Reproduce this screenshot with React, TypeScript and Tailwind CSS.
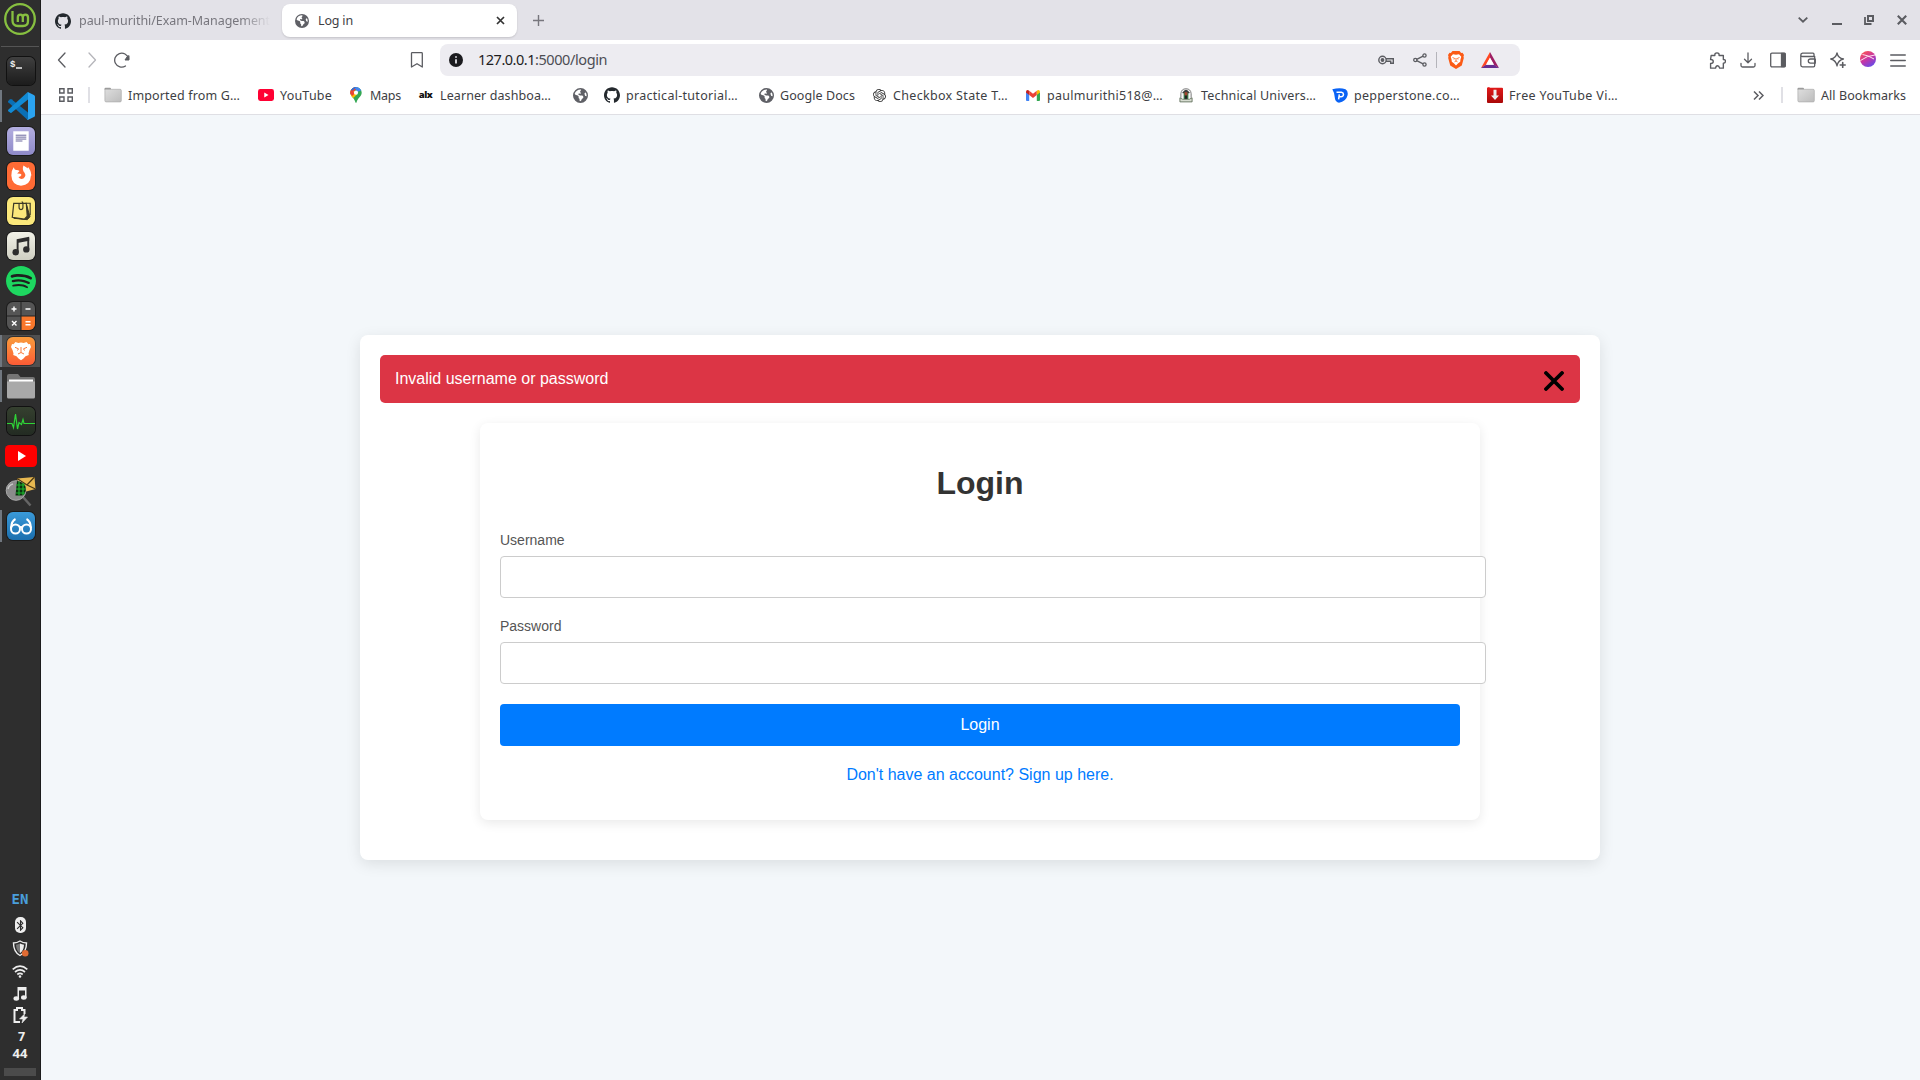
import React, { useLayoutEffect, useRef } from "react";
import { SiGithub, SiSpotify, SiOpenai } from "react-icons/si";
import { MdBluetooth } from "react-icons/md";
import { FaEarthAmericas } from "react-icons/fa6";

type Kids = { children?: React.ReactNode };

/* Text whose letter spacing is adjusted so that it takes the given width. */
function FitText({ text, width, className = "" }: { text: string; width: number; className?: string }) {
  const ref = useRef<HTMLSpanElement>(null);
  useLayoutEffect(() => {
    const el = ref.current;
    if (!el) return;
    el.style.letterSpacing = "0px";
    const natural = el.getBoundingClientRect().width;
    el.style.letterSpacing = `${(width - natural) / text.length}px`;
  }, [text, width]);
  return (
    <span ref={ref} className={`inline-block whitespace-nowrap ${className}`}>
      {text}
    </span>
  );
}

const Globe = ({ className = "h-[15px] w-[15px]" }: { className?: string }) => (
  <FaEarthAmericas className={`${className} shrink-0 text-[#5f6066]`} />
);

const Folder = () => (
  <svg viewBox="0 0 18 16" className="h-4 w-[18px] shrink-0">
    <defs>
      <linearGradient id="fold" x1="0" y1="0" x2="1" y2="1">
        <stop offset="0" stopColor="#dedede" />
        <stop offset="1" stopColor="#bcbcbc" />
      </linearGradient>
    </defs>
    <path d="M0.5 3V1.8Q.5.8 1.5.8H6Q7 .8 7 2v1z" fill="#9a9a9a" />
    <rect x="0.9" y="2.3" width="16.4" height="12.6" rx="1.2" fill="url(#fold)" stroke="#adadad" strokeWidth=".7" />
  </svg>
);

const YouTube = ({ className = "h-3 w-4" }: { className?: string }) => (
  <svg viewBox="0 0 32 22" className={`${className} shrink-0`} preserveAspectRatio="none">
    <rect width="32" height="22" rx="4.5" fill="#f03" />
    <path d="M12.5 6.3v9.4l8.5-4.7z" fill="#fff" />
  </svg>
);

const MapPin = () => (
  <svg viewBox="0 0 12 16" className="h-4 w-3 shrink-0">
    <defs>
      <clipPath id="pin">
        <path d="M6 0a5.7 5.7 0 0 1 5.7 5.7C11.7 9.3 7.6 11 6.6 15.3Q6 16.5 5.4 15.3C4.4 11 .3 9.3.3 5.7A5.7 5.7 0 0 1 6 0z" />
      </clipPath>
    </defs>
    <g clipPath="url(#pin)">
      <rect width="12" height="16" fill="#34a853" />
      <path d="M0 0h7L3 7H0z" fill="#ea4335" />
      <path d="M4 0h8v3L7.5 5z" fill="#4285f4" />
      <path d="M7 7.5 0 14V8l4-4z" fill="#fbbc04" />
      <path d="M0 0h6L1 5z" fill="#1a73e8" />
      <path d="M1 2.5 5 6 2.5 9-1 6z" fill="#ea4335" />
      <circle cx="6" cy="5.7" r="2.1" fill="#fff" />
    </g>
  </svg>
);

const Gmail = () => (
  <svg viewBox="0 0 24 18" className="h-[11px] w-[14px] shrink-0" preserveAspectRatio="none">
    <path d="M0 3v13.5Q0 18 1.5 18H5.5V7z" fill="#4285f4" />
    <path d="M24 3v13.5q0 1.5-1.5 1.5h-4V7z" fill="#34a853" />
    <path d="M5.5 1.3 12 6.2l6.5-4.9V8L12 13 5.5 8z" fill="#ea4335" />
    <path d="M0 2.5Q.5-.8 4 .3l1.5 1V8L0 4z" fill="#c5221f" />
    <path d="M24 2.5Q23.5-.8 20 .3l-1.5 1V8L24 4z" fill="#fbbc04" />
  </svg>
);

const Crest = () => (
  <svg viewBox="0 0 14 16" className="h-[15px] w-[14px] shrink-0">
    <path d="M1.5 10.5V6Q2 .8 7 .8T12.5 6v4.5" fill="#f4f4f4" stroke="#777" strokeWidth="1" />
    <path d="M3.5 4.5Q5 1.8 7 1.8t3.5 2.7v1h-7z" fill="#3b3b3b" />
    <rect x="4.5" y="5" width="5" height="7" fill="#357a46" />
    <rect x="5.5" y="4.5" width="3" height="3.5" fill="#a7432f" />
    <rect x="5.8" y="8" width="2.4" height="4" fill="#222" />
    <path d="M.5 10.5 3.5 12h7l3-1.5v4.3H.5z" fill="#d8ddd2" stroke="#5b6b56" strokeWidth=".9" />
  </svg>
);

const Pepperstone = () => (
  <svg viewBox="0 0 16 15" className="h-[15px] w-4 shrink-0">
    <path d="M.3 1.3Q8-.8 13.5 1.3 16.5 3 15.5 7.5 14 13.5 7 14.8q-3.5-1-4-4Q2.8 5 .3 1.3z" fill="#0a63f5" />
    <path d="M4.5 4.3h5q2 .3 2 2.2-.3 2.300-2.500 2.300H6.600M6.600 11.300 7.300 6.300" fill="none" stroke="#fff" strokeWidth="1.5" />
  </svg>
);

const RedDownload = () => (
  <svg viewBox="0 0 16 16" className="h-4 w-4 shrink-0">
    <defs>
      <linearGradient id="red" x1="0" y1="0" x2="0" y2="1">
        <stop offset="0" stopColor="#e31a1a" />
        <stop offset="1" stopColor="#a90808" />
      </linearGradient>
    </defs>
    <path d="M0 .8 2 0l1 .8h12q1 0 1 1V15q0 1-1 1H1q-1 0-1-1z" fill="url(#red)" />
    <path d="M6.5 2.8h3V8.500H12L8 13 4 8.500h2.500z" fill="#eee" />
  </svg>
);

/* ---------- desktop panel ---------- */

function DockSlot({ children, active, focus }: Kids & { active?: boolean; focus?: boolean }) {
  return (
    <div className="flex h-[35px] w-[41px] shrink-0 items-center">
      <div className={`flex h-8 w-10 items-center ${focus ? "bg-[#505050]" : ""}`}>
        <div className={`h-8 w-[2px] ${active ? "bg-[#70777f]" : ""}`} />
        <div className="flex w-[38px] items-center justify-center">{children}</div>
      </div>
    </div>
  );
}

const Tile = ({ children, className }: Kids & { className: string }) => (
  <div className={`flex h-[28px] w-[28px] items-center justify-center overflow-hidden rounded-[6px] shadow-[0_0_0_1px_#0006] ${className}`}>
    {children}
  </div>
);

function Dock() {
  return (
    <aside className="flex h-full w-[41px] shrink-0 flex-col overflow-hidden border-r border-[#1c1c1c] bg-[#2e2e2e]">
      <div className="flex h-[46px] w-[40px] shrink-0 justify-center pt-[3px]">
        <svg viewBox="0 0 32 32" className="h-8 w-8">
          <circle cx="16" cy="16" r="14.8" fill="none" stroke="#87c040" strokeWidth="2.3" />
          <path
            d="M8.5 8v9.5q0 5.5 5.500 5.500h5q5 0 5-5v-3.500q0-2.800-2.600-2.800t-2.600 2.800v4.500M18.800 14.500q0-2.800-2.500-2.800t-2.500 2.800v4.500"
            fill="none"
            stroke="#87c040"
            strokeWidth="2.3"
          />
        </svg>
      </div>
      <div className="mb-[6px] ml-px h-px w-[38px] shrink-0 bg-[#555]" />

      <DockSlot>
        <Tile className="bg-linear-to-b from-[#404040] to-[#1c1c1c] shadow-[0_0_0_1px_#111]">
          <svg viewBox="0 0 28 28" className="h-[28px] w-[28px] shrink-0">
            <text x="3" y="10" fontSize="9" fontWeight="bold" fill="#eee" fontFamily="Liberation Mono, monospace">$</text>
            <path d="M9 11h6" stroke="#eee" strokeWidth="1.3" />
          </svg>
        </Tile>
      </DockSlot>
      <DockSlot active>
        <svg viewBox="0 0 100 100" className="h-[28px] w-[28px]">
          <path d="M5 31.5 12 26q2-1.500 4 0L76 74v25q-2 .5-5-2L4.500 37q-2.500-3 .5-5.500z" fill="#0a6fb5" />
          <path d="M5 68.500 12 74q2 1.500 4 0L76 26V1q-2-.5-5 2L4.500 63q-2.500 3 .5 5.500z" fill="#118ad4" />
          <path d="M71 2q2-2 5-1l20 9.500q4 2 4 6v67q0 4-4 6L76 99q-3 1-5-2 4 2 4-3V6q0-5-4-4z" fill="#2ba4f1" />
        </svg>
      </DockSlot>
      <DockSlot>
        <Tile className="bg-linear-to-b from-[#b3aee0] to-[#8f8ac8]">
          <svg viewBox="0 0 29 29" className="h-[28px] w-[28px]">
            <path d="M6.500 4.500h12l4 0v20h-16z" fill="#fff" />
            <path d="M9 8.500h11M9 10.500h11M9 12.500h11M9 14.500h7" stroke="#68639c" strokeWidth="1" />
          </svg>
        </Tile>
      </DockSlot>
      <DockSlot>
        <Tile className="bg-[#ff6b35]">
          <svg viewBox="0 0 29 29" className="h-[28px] w-[28px]">
            <path d="M4.500 14Q4.300 9 7 5.500q.5 2.500 2.300 2.800 2-.3 3.700 1L10.500 12q4 0 4.500 1.500-1 2-3.200 2 2.200 3 5.200 1.500 3.500-2.500 1-6-2.500-3-1-7.500 7.500 4 7.800 10.500Q24.300 24 14.500 24.500 5 24 4.500 14z" fill="#fff" />
            <path d="M21.500 6q3 4 3 8" stroke="#fff" strokeWidth="1.6" fill="none" />
          </svg>
        </Tile>
      </DockSlot>
      <DockSlot>
        <Tile className="bg-[#fbe87b]">
          <svg viewBox="0 0 29 29" className="h-[28px] w-[28px]" fill="none" stroke="#3d3a26">
            <path d="M19 6.500h5L24 19" strokeWidth="1.2" />
            <path d="m7 22 14 1.500 2.800-3L20 7l1 13z" strokeWidth="1" fill="#3d3a26" />
            <path d="M7 6.500h13l1 13.500-3 3L5.500 21z" fill="#fbe87b" strokeWidth="1.3" />
            <path d="M12.500 7v4q0 2 2 2t2-2V6.500q0-1.500-1.300-1.500" strokeWidth="1.2" />
          </svg>
        </Tile>
      </DockSlot>
      <DockSlot>
        <Tile className="bg-linear-to-b from-[#f2f2e8] to-[#cfcfc2]">
          <svg viewBox="0 0 29 29" className="h-[28px] w-[28px]" fill="#2d2d2d">
            <path d="M10 7.500 23 5v4L12 11.200V21h-2z" />
            <path d="M21 6h2v12h-2z" />
            <circle cx="9" cy="21" r="3.3" />
            <circle cx="20" cy="18" r="3.3" />
          </svg>
        </Tile>
      </DockSlot>
      <DockSlot>
        <div className="flex h-[30px] w-[30px] items-center justify-center rounded-full bg-[#1f1f1f]">
          <SiSpotify className="h-[30px] w-[30px] text-[#1ed760]" />
        </div>
      </DockSlot>
      <DockSlot>
        <Tile className="bg-[#555]">
          <svg viewBox="0 0 28 28" className="h-[28px] w-[28px]">
            <path d="M14 14h14v14H14z" fill="#f9772b" />
            <path d="M14 0v28M0 14h28" stroke="#242424" strokeWidth="1" />
            <path d="M4.500 7h5M7 4.500v5M18.500 7h5M5 19l4.500 4.500M9.500 19 5 23.500M18.500 19.800h5M18.500 22.800h5" stroke="#fff" strokeWidth="1.4" />
          </svg>
        </Tile>
      </DockSlot>
      <DockSlot active focus>
        <Tile className="bg-linear-to-b from-[#f99b3c] to-[#fb5a35]">
          <svg viewBox="0 0 28 28" className="h-[28px] w-[28px]">
            <path d="m8.500 5 2.800 1L14 5.600 16.700 6l2.800-1 2 2.300 1.500-.3 1 3-1.500 3-1 3.500 .3 1.500-3.300 1.200-2 2.300L14 23.300l-2.500-1.800-2-2.300-3.300-1.200.3-1.500-1-3.500L4 10l1-3 1.500.3z" fill="#fff" />
            <path d="M8 10.300l3.500 1.500-1 1.700M20 10.300l-3.500 1.500 1 1.700M14 10v5.500M11 17l3-1.500 3 1.500" stroke="#fb7a38" strokeWidth="1" fill="none" />
          </svg>
        </Tile>
      </DockSlot>
      <DockSlot active>
        <svg viewBox="0 0 28 26" className="h-[26px] w-[28px]">
          <path d="M0 3Q0 1 2 1h9l2.500 3H26q2 0 2 2v18H0z" fill="#747474" />
          <path d="M2 6.500h24v3H2z" fill="#fff" />
          <path d="M0 8.500h28V24q0 1.500-1.500 1.500h-25Q0 25.500 0 24z" fill="#a9a9a9" />
        </svg>
      </DockSlot>
      <DockSlot>
        <Tile className="bg-linear-to-b from-[#35402f] to-[#232b22] shadow-[0_0_0_1px_#111]">
          <svg viewBox="0 0 28 28" className="h-[28px] w-[28px]">
            <path d="M0 16.500h5l1.500 4L8.500 7l2 15 1.500-6.500 2.500 2 1.500-5 1 4H28" fill="none" stroke="#2fd437" strokeWidth="1.2" />
          </svg>
        </Tile>
      </DockSlot>
      <DockSlot>
        <svg viewBox="0 0 32 22" className="h-[22px] w-8">
          <rect width="32" height="22" rx="4.5" fill="#f00" />
          <path d="M13 6v10l8-5z" fill="#fff" />
        </svg>
      </DockSlot>
      <DockSlot>
        <svg viewBox="0 0 32 32" className="h-8 w-8">
          <path d="M12 3.500 29.500 2l1 12-13 3.500z" fill="#e8b850" />
          <path d="M12 3.500 22 10l7.500-8M21 9.500l9.500 4.500" fill="none" stroke="#4a3714" strokeWidth="1.3" />
          <path d="m18 22 7.500 8.500" stroke="#666" strokeWidth="2.5" />
          <circle cx="11" cy="15.5" r="9.8" fill="#8b8b8b" stroke="#aaa" />
          <path d="M12 6q9 1 9 8.500-1 5.500-4 6h-6.500z" fill="#0b310e" />
          <path d="M11 10h9M11 14h10M11 18h9M14 6.500v14M18 8v12" stroke="#1db52d" strokeWidth="1.2" />
          <path d="M3 14q1-4 5-5" stroke="#c7c7c7" strokeWidth="1.5" fill="none" />
        </svg>
      </DockSlot>
      <DockSlot active>
        <Tile className="bg-linear-to-b from-[#3a9ad9] to-[#1b6fae]">
          <svg viewBox="0 0 28 28" className="h-[28px] w-[28px]" fill="none" stroke="#fff" strokeWidth="2">
            <circle cx="8.5" cy="17" r="4.5" />
            <circle cx="19.5" cy="17" r="4.5" />
            <path d="M4 16q.5-7 4.500-9M24 16q-.5-7-4.500-9M12.500 15.500q1.500-1 3 0" />
          </svg>
        </Tile>
      </DockSlot>

      <div className="mt-auto flex w-10 shrink-0 flex-col items-center font-['Noto_Sans',sans-serif] font-bold text-[#eee]">
        <div className="flex h-[27px] items-center font-['DejaVu_Sans_Mono',monospace] text-[14px] text-[#4a9edb]">EN</div>
        <div className="flex h-6 items-center">
          <div className="flex h-4 w-[11px] items-center justify-center rounded-[5px] bg-[#eee] text-[#2e2e2e]">
            <MdBluetooth className="h-[13px] w-[13px] shrink-0" />
          </div>
        </div>
        <div className="flex h-[22px] items-center">
          <svg viewBox="0 0 17 17" className="h-[17px] w-[17px]">
            <path d="M8 1q3 2 6.500 2 0 9-6.500 12.500Q1.500 12 1.500 3 5 3 8 1z" fill="none" stroke="#eee" strokeWidth="1.4" />
            <path d="M8 3.500q2 1 4 1.300-.3 6-4 8.500z" fill="#eee" />
            <path d="M8 3.500q-2 1-4 1.300.3 6 4 8.500z" fill="#777" />
            <circle cx="13.2" cy="13.3" r="3.3" fill="#e06c34" />
          </svg>
        </div>
        <div className="flex h-[25px] items-center">
          <svg viewBox="0 0 16 13" className="h-[13px] w-4" fill="none" stroke="#eee" strokeWidth="1.7">
            <path d="M.7 4.300q7.300-6.300 14.600 0M3 7q5-4.300 10 0M5.300 9.500q2.700-2.300 5.400 0" />
            <circle cx="8" cy="11.5" r="1.3" fill="#eee" stroke="none" />
          </svg>
        </div>
        <div className="flex h-5 items-center">
          <svg viewBox="0 0 14 14" className="h-[14px] w-[14px]" fill="#eee">
            <path d="M4.500 0h9v11h-1.500V3.500H6V12H4.500z" />
            <ellipse cx="3.3" cy="11.5" rx="2.8" ry="2.2" />
            <ellipse cx="10.8" cy="10.5" rx="2.8" ry="2.2" />
          </svg>
        </div>
        <div className="flex h-[22px] items-center">
          <svg viewBox="0 0 16 16" className="h-4 w-4">
            <path d="M12.500 7V3H10V1H5v2H2.500v12H8" fill="none" stroke="#eee" strokeWidth="2" />
            <path d="m12.500 7-5 5H11l-1 4 5.500-6H12z" fill="#eee" stroke="#eee" strokeWidth=".6" />
          </svg>
        </div>
        <div className="flex h-[23px] items-center pl-[3px] text-[12.5px]">7</div>
        <div className="flex h-[10px] items-center text-[13px]">44</div>
        <div className="mt-[9px] mb-1 h-2 w-8 bg-[#4b4b4b]" />
      </div>
    </aside>
  );
}

/* ---------- browser chrome ---------- */

const Cell = ({ children, className = "" }: Kids & { className?: string }) => (
  <div className={`flex h-8 w-[30px] shrink-0 items-center justify-center ${className}`}>{children}</div>
);

function TabStrip() {
  return (
    <div className="flex h-10 shrink-0 items-start bg-[#e3e2e8] pt-1">
      <div className="flex h-[33px] w-[241px] items-center pl-[14px]">
        <SiGithub className="h-4 w-4 shrink-0 text-[#24292e]" />
        <div className="mt-px ml-2 w-[191px] overflow-hidden mask-r-from-85% text-[12.5px] text-[#77767d]">
          <FitText text="paul-murithi/Exam-Management" width={191} />
        </div>
      </div>
      <div className="flex h-[33px] w-[235px] items-center rounded-lg bg-white pl-[13px] shadow-[0_1px_2px_#0002]">
        <Globe className="h-[14px] w-[14px]" />
        <FitText text="Log in" width={35} className="mt-px ml-[9px] text-[12.5px] text-[#3f4045]" />
        <svg viewBox="0 0 9 9" className="mr-[12px] ml-auto h-[9px] w-[9px]">
          <path d="m1 1 7 7M8 1 1 8" stroke="#333" strokeWidth="1.7" />
        </svg>
      </div>
      <Cell className="ml-[6px]">
        <svg viewBox="0 0 11 11" className="h-[11px] w-[11px]">
          <path d="M5.500 0v11M0 5.500h11" stroke="#77767d" strokeWidth="1.4" />
        </svg>
      </Cell>
      <div className="ml-auto flex text-[#5b5c61]">
        <div className="flex h-8 w-[34px] items-center justify-center">
          <svg viewBox="0 0 10 6" className="h-[6px] w-[10px]"><path d="m.7.7 4.300 4L9.300.7" fill="none" stroke="currentColor" strokeWidth="1.8" /></svg>
        </div>
        <div className="flex h-8 w-[34px] items-center justify-center pt-2"><div className="h-[2px] w-[10px] bg-current" /></div>
        <div className="flex h-8 w-[30px] items-center justify-center">
          <svg viewBox="0 0 10 10" className="h-[10px] w-[10px]" fill="none" stroke="currentColor"><path d="M4 1h5v5H4z" strokeWidth="2" /><path d="M1 2v7h6.500" strokeWidth="1.8" /></svg>
        </div>
        <div className="flex h-8 w-[36px] items-center justify-center">
          <svg viewBox="0 0 10 10" className="h-[10px] w-[10px]"><path d="m.8.8 8.400 8.400M9.200.8.8 9.200" stroke="currentColor" strokeWidth="2.1" /></svg>
        </div>
      </div>
    </div>
  );
}

const Stroke = ({ d, children, className = "h-4 w-4" }: Kids & { d?: string; className?: string }) => (
  <svg viewBox="0 0 16 16" className={className} fill="none" stroke="currentColor" strokeWidth="1.3" strokeLinecap="round" strokeLinejoin="round">
    {d && <path d={d} />}
    {children}
  </svg>
);

function Toolbar() {
  return (
    <div className="flex h-9 shrink-0 items-center bg-white pt-1 pl-[6px] text-[#5b5c61]">
      <Cell><Stroke d="M11 1 4.500 8 11 15" /></Cell>
      <Cell className="text-[#b5b5ba]"><Stroke d="M5 1l6.500 7L5 15" /></Cell>
      <Cell>
        <Stroke d="M11.500 14A7 7 0 1 1 14.500 6.500">
          <path d="M15 4v4h-4l2-3z" fill="currentColor" strokeWidth="1" />
        </Stroke>
      </Cell>
      <Cell className="ml-[265px]"><Stroke d="M3 .7h9.500q.8 0 .8.8V15L8 11.700 2.500 15V1.500q0-.8.5-.8z" /></Cell>
      <div className="ml-2 flex h-8 w-[1080px] items-center rounded-lg bg-[#edecf1] pl-[9px]">
        <svg viewBox="0 0 14 14" className="h-[14px] w-[14px]">
          <circle cx="7" cy="7" r="7" fill="#1b1b1f" />
          <path d="M7 6.200v4.300M7 3.200v1.600" stroke="#edecf1" strokeWidth="1.7" />
        </svg>
        <div className="ml-[15px] flex text-[14.5px] text-[#1d1d22]">
          <FitText text="127.0.0.1" width={57} />
          <FitText text=":5000/login" width={72} className="text-[#4c4d54]" />
        </div>
        <div className="ml-auto flex items-center pr-[21px]">
          <svg viewBox="0 0 16 10" className="h-[10px] w-4" fill="none" stroke="#5b5c61" strokeWidth="1.4">
            <circle cx="4.5" cy="5" r="3.7" />
            <circle cx="4.5" cy="5" r="1.2" fill="#5b5c61" />
            <path d="M8 3.700h7.300v4.600h-2.600V6.300H8" />
          </svg>
          <svg viewBox="0 0 14 14" className="ml-[19px] h-[14px] w-[14px]" fill="none" stroke="#5b5c61" strokeWidth="1.3">
            <circle cx="2.3" cy="7" r="1.6" />
            <circle cx="11.5" cy="2.5" r="1.6" />
            <circle cx="11.5" cy="11.5" r="1.6" />
            <path d="m3.700 6.300 6.400-3.100M3.700 7.700l6.400 3.100" />
          </svg>
          <div className="ml-[9px] h-4 w-px bg-[#b4b4ba]" />
          <svg viewBox="0 0 16 18" className="ml-[11px] h-[18px] w-4">
            <path d="M4.500 0h7l1.700 2 1.300-.2L16 4l-.5 1.500.3 1.500-2 7.500L8 18l-5.800-3.500L.2 7l.3-1.500L0 4l1.500-2.200 1.300.2z" fill="#fb5a15" />
            <path d="M5 3.300 8 3.800l3-.5 2.300 2.500-.8 2.500-.3 2.500-2 1.500L8 14.500l-2.200-2.200-2-1.500-.3-2.500-.8-2.500z" fill="#fff" />
            <path d="m4.500 6.500 2.300 1-.8 1M11.500 6.500l-2.300 1 .8 1M8 7v3M6.500 10.800 8 10l1.500.8" stroke="#fb5a15" strokeWidth=".8" fill="none" />
          </svg>
          <svg viewBox="0 0 18 16" className="ml-[17px] h-4 w-[18px]">
            <path d="M9 0 0 16l5-3 4-7z" fill="#ff4724" />
            <path d="m9 0 9 16-5-3-4-7z" fill="#9e1f63" />
            <path d="M0 16h18l-5-3.200H5z" fill="#662d91" />
            <path d="m9 5.500 4 7.300H5z" fill="#fff" />
          </svg>
        </div>
      </div>
      <div className="ml-[183px] flex">
        <Cell className="pr-[2px]"><Stroke className="h-[17px] w-[17px]" d="M2 3.300h3.500Q5.300.8 7.500.8t2 2.500h4V7q2.200 0 2 1.800-.2 1.700-2 1.700v4.700H10Q9.500 13 8 13t-1.800 2.200H1.500v-4.500q2.500 0 2.500-1.800T1.500 7z" /></Cell>
        <Cell><Stroke d="M8 1v9.500M4.500 7.300 8 10.800l3.500-3.500M1 11.500v2q0 1.500 1.500 1.500h11q1.500 0 1.500-1.500v-2" /></Cell>
        <Cell><Stroke><rect x=".7" y="1.2" width="14.6" height="13.6" rx="1.2" /><path d="M11.500 1.500h3.500v13h-3.500z" fill="currentColor" /></Stroke></Cell>
        <Cell><Stroke d="M14.700 4.500H2.500Q.8 4.500.8 3T2.500 1.200H13q1 0 1 1v2M.8 3v10q0 1.800 1.700 1.800h11q1.200 0 1.200-1.200V4.500M15.300 7H10.500Q8.300 7 8.300 9.100t2.200 2.100h4.800z" /></Cell>
        <Cell>
          <Stroke d="M7 .8Q8 6 13.500 7 8 8.300 7 14 6 8.300.7 7 6 6 7 .8z"><path d="M12.700 10.500v5M10.200 13h5" strokeWidth="1.6" /></Stroke>
        </Cell>
        <Cell>
          <svg viewBox="0 0 16 16" className="mb-[2px] h-4 w-4">
            <defs>
              <linearGradient id="ava" x1=".2" y1="0" x2=".8" y2="1">
                <stop offset="0" stopColor="#ff5350" />
                <stop offset=".5" stopColor="#c336a8" />
                <stop offset="1" stopColor="#5b4df0" />
              </linearGradient>
            </defs>
            <circle cx="8" cy="8" r="8" fill="url(#ava)" />
            <path d="M.5 9.500Q7 4.500 15 4M2.500 3.500q5 .5 11.500 4.500" stroke="#ffe3ef" strokeWidth="1" fill="none" />
          </svg>
        </Cell>
        <Cell><Stroke d="M.7 3h14.600M.7 8.500h14.600M.7 14h14.600" /></Cell>
      </div>
    </div>
  );
}

function Bookmark({ icon, text, width, className }: { icon: React.ReactNode; text?: string; width?: number; className: string }) {
  return (
    <div className={`flex shrink-0 items-center ${className}`}>
      {icon}
      {text && <FitText text={text} width={width ?? 0} className="mt-[2px]" />}
    </div>
  );
}

function BookmarksBar() {
  return (
    <div className="flex h-[39px] shrink-0 items-center border-b border-[#dfdfe4] bg-white pl-[18px] text-[12.5px] text-[#3d3e43]">
      <svg viewBox="0 0 14 14" className="h-[14px] w-[14px]" fill="none" stroke="#5b5c61" strokeWidth="1.4">
        <path d="M.7.7h4.300V5H.7zM9 .7h4.300V5H9zM.7 9h4.300v4.300H.7zM9 9h4.300v4.300H9z" />
      </svg>
      <div className="ml-[15px] h-4 w-[2px] bg-[#e0e0e5]" />
      <Bookmark className="ml-[14px] w-[154px] gap-[6px]" icon={<Folder />} text="Imported from G…" width={112} />
      <Bookmark className="w-[92px] gap-[6px]" icon={<YouTube />} text="YouTube" width={52} />
      <Bookmark className="w-[68px] gap-2" icon={<MapPin />} text="Maps" width={31} />
      <Bookmark
        className="w-[155px] gap-[7px]"
        icon={<span className="flex w-[15px] justify-center font-['Open_Sans',sans-serif] text-[9.5px] font-extrabold tracking-[-0.5px] text-[#111]">alx</span>}
        text="Learner dashboa…"
        width={111}
      />
      <Bookmark className="w-[31px]" icon={<Globe />} />
      <Bookmark className="w-[155px] gap-[6px]" icon={<SiGithub className="h-4 w-4 text-[#24292e]" />} text="practical-tutorial…" width={112} />
      <Bookmark className="w-[114px] gap-[6px]" icon={<Globe />} text="Google Docs" width={75} />
      <Bookmark className="w-[153px] gap-[7px]" icon={<SiOpenai className="h-[13px] w-[13px] text-[#333]" />} text="Checkbox State T…" width={115} />
      <Bookmark className="w-[153px] gap-[7px]" icon={<Gmail />} text="paulmurithi518@…" width={116} />
      <Bookmark className="w-[153px] gap-2" icon={<Crest />} text="Technical Univers…" width={115} />
      <Bookmark className="w-[155px] gap-[6px]" icon={<Pepperstone />} text="pepperstone.co…" width={106} />
      <Bookmark className="w-[140px] gap-[6px]" icon={<RedDownload />} text="Free YouTube Vi…" width={109} />
      <svg viewBox="0 0 11 9" className="ml-auto h-[9px] w-[11px]" fill="none" stroke="#5b5c61" strokeWidth="1.5">
        <path d="m1 .5 4 4-4 4M6 .5l4 4-4 4" />
      </svg>
      <div className="ml-[17px] h-4 w-[2px] bg-[#e0e0e5]" />
      <Bookmark className="mr-[14px] ml-[14px] gap-[6px]" icon={<Folder />} text="All Bookmarks" width={85} />
    </div>
  );
}

/* ---------- web page ---------- */

function Field({ label, type }: { label: string; type: string }) {
  return (
    <label className="mb-5 block text-[14px] leading-4 text-[#555]">
      {label}
      <input type={type} className="mt-2 block h-[42px] w-[986px] rounded border border-[#ccc] bg-white px-3" />
    </label>
  );
}

function LoginPage() {
  return (
    <main className="flex flex-1 items-center justify-center bg-[#f3f7fa] pr-px font-['Liberation_Sans',Arial,sans-serif]">
      <section className="h-[525px] w-[1240px] rounded-lg bg-white p-5 shadow-[0_4px_15px_rgba(0,0,0,0.1)]">
        <div className="flex h-12 items-center justify-between rounded-[5px] bg-[#dc3545] pr-4 pl-[15px] text-base text-white">
          <span className="mb-px">Invalid username or password</span>
          <svg viewBox="0 0 20 20" className="mt-1 h-5 w-5">
            <path d="m2 2 16 16M18 2 2 18" stroke="#000" strokeWidth="3.8" strokeLinecap="round" />
          </svg>
        </div>
        <form className="mx-auto mt-5 h-[397px] w-[1000px] rounded-lg bg-white px-5 pt-[42px] shadow-[0_3px_12px_rgba(0,0,0,0.09)]" onSubmit={(e) => e.preventDefault()}>
          <h1 className="mb-[30px] text-center text-[32px] leading-[37px] font-bold text-[#333]">Login</h1>
          <Field label="Username" type="text" />
          <Field label="Password" type="password" />
          <button className="block h-[42px] w-full rounded bg-[#007bff] text-base text-white">Login</button>
          <p className="mt-5 text-center text-base leading-[18px] text-[#007bff]">
            <a href="#signup">Don't have an account? Sign up here.</a>
          </p>
        </form>
      </section>
    </main>
  );
}

export default function App() {
  return (
    <div className="flex h-[1080px] w-[1920px] overflow-hidden bg-white font-['Noto_Sans',sans-serif]">
      <Dock />
      <div className="flex min-w-0 flex-1 flex-col">
        <TabStrip />
        <Toolbar />
        <BookmarksBar />
        <LoginPage />
      </div>
    </div>
  );
}
